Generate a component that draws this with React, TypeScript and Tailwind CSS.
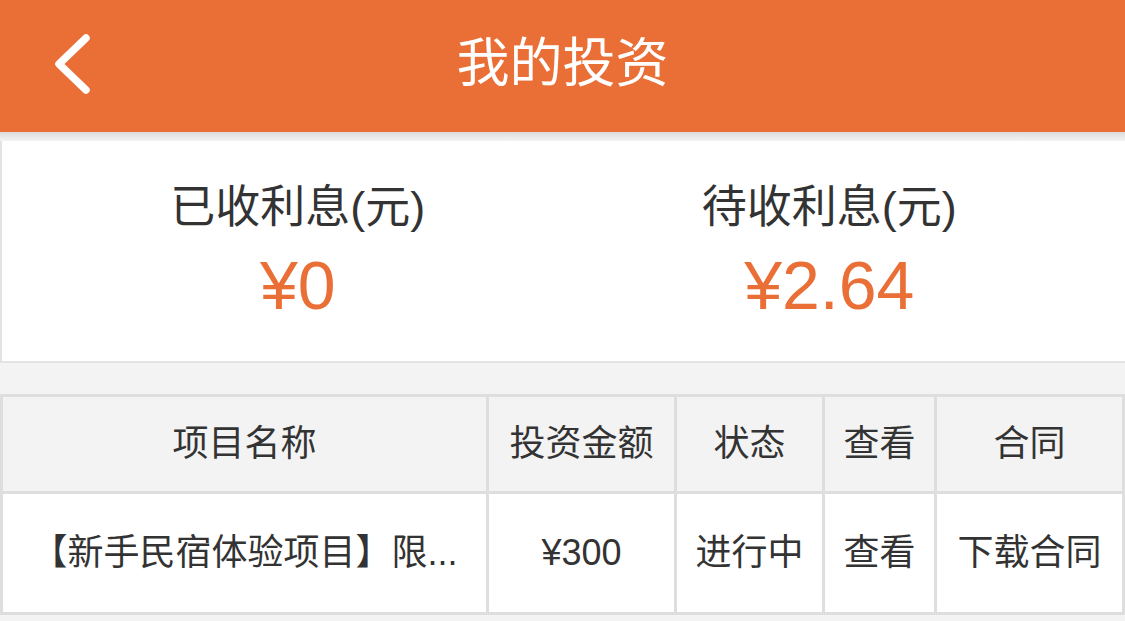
import React from 'react'

const font = { fontFamily: '"Liberation Sans", "Noto Sans CJK SC", sans-serif' }

const heads = ['项目名称', '投资金额', '状态', '查看', '合同']
const row = ['【新手民宿体验项目】限...', '¥300', '进行中', '查看', '下载合同']

export default function App() {
  return (
    <div style={font} className="w-[1125px] h-[621px] overflow-hidden bg-[#f3f3f3] text-[#333]">
      {/* Header */}
      <div className="relative h-[132px] bg-[#ea6f37] flex items-center justify-center">
        <svg className="absolute left-[50px] top-[30px]" width="44" height="66" viewBox="0 0 44 66">
          <polyline points="36,8 9,34 36,60" fill="none" stroke="#fff" strokeWidth="7.5" strokeLinecap="round" strokeLinejoin="round" />
        </svg>
        <h1 className="text-[53px] leading-none text-white pb-[6px]">我的投资</h1>
      </div>
      <div className="h-[9px] bg-gradient-to-b from-[#dcdcdc] to-[#f4f4f4]" />

      {/* Summary card */}
      <div className="h-[222px] bg-white border-l-2 border-b-2 border-[#e3e3e3] flex px-[30px]">
        <div className="flex-1 flex flex-col items-center pt-[40px]">
          <div className="text-[45px] leading-[54px]">已收利息(元)</div>
          <div className="text-[68px] leading-[76px] text-[#ea6f37] mt-[12px]">¥0</div>
        </div>
        <div className="flex-1 flex flex-col items-center pt-[40px]">
          <div className="text-[45px] leading-[54px]">待收利息(元)</div>
          <div className="text-[68px] leading-[76px] text-[#ea6f37] mt-[12px]">¥2.64</div>
        </div>
      </div>

      {/* Table */}
      <div className="mt-[31px] grid grid-cols-[483px_185px_145px_109px_185px] grid-rows-[94px_118px] gap-[3px] p-[3px] bg-[#dedede] text-[36px]">
        {heads.map((h) => (
          <div key={h} className="bg-[#f3f3f3] flex items-center justify-center whitespace-nowrap">
            {h}
          </div>
        ))}
        {row.map((c, i) => (
          <div key={i} className="bg-white flex items-center justify-center whitespace-nowrap">
            {c}
          </div>
        ))}
      </div>
    </div>
  )
}
